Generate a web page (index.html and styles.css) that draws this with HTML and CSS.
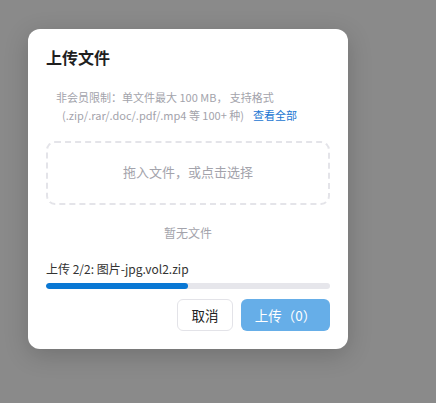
FILE: index.html
```html
<!DOCTYPE html>
<html lang="zh-CN">
<head>
<meta charset="utf-8">
<title>上传文件</title>
<link rel="stylesheet" href="styles.css">
</head>
<body>
  <div class="dialog">
    <h2 class="dialog-title">上传文件</h2>
    <div class="limit-note">
      <span>非会员限制：单文件最大 100 MB， 支持格式</span>
      <span class="limit-line">(.zip/.rar/.doc/.pdf/.mp4 等 100+ 种)<a class="see-all" href="#">查看全部</a></span>
    </div>
    <div class="drop-zone">拖入文件，或点击选择</div>
    <div class="empty-list">暂无文件</div>
    <div class="progress-label">上传 2/2: 图片-jpg.vol2.zip</div>
    <div class="progress-track"><div class="progress-fill" style="width:50%"></div></div>
    <div class="actions">
      <button class="btn btn-cancel">取消</button>
      <button class="btn btn-upload">上传（0）</button>
    </div>
  </div>
</body>
</html>
```
FILE: styles.css
```css
html, body {
  margin: 0;
  height: 100%;
}
body {
  background: #8a8a8a;
  font-family: "Noto Sans CJK SC", "Noto Sans", sans-serif;
  padding: 29px 0 0 28px;
  box-sizing: border-box;
}
.dialog {
  width: 320px;
  height: 320px;
  box-sizing: border-box;
  background: #fff;
  border-radius: 12px;
  padding: 16px 18px 18px;
  box-shadow: 0 6px 24px rgba(0, 0, 0, 0.18);
  display: flex;
  flex-direction: column;
}
.dialog-title {
  margin: 0;
  font-size: 16px;
  line-height: 24px;
  font-weight: 700;
  color: #1f1f1f;
}
.limit-note {
  margin-top: 19px;
  padding-left: 10px;
  display: flex;
  flex-direction: column;
  font-size: 11px;
  line-height: 18px;
  color: #a3a3ab;
}
.limit-line {
  display: flex;
  align-items: baseline;
  padding-left: 6px;
}
.see-all {
  margin-left: 9px;
  color: #1a76d2;
  text-decoration: none;
}
.drop-zone {
  margin-top: 17px;
  height: 64px;
  box-sizing: border-box;
  border: 2px dashed #e4e4e9;
  border-radius: 9px;
  display: flex;
  align-items: center;
  justify-content: center;
  padding-bottom: 3px;
  font-size: 13px;
  color: #a3a3ab;
}
.empty-list {
  margin-top: 19px;
  text-align: center;
  font-size: 12px;
  line-height: 18px;
  color: #a3a3ab;
}
.progress-label {
  margin-top: 18px;
  font-size: 12px;
  line-height: 18px;
  color: #333;
}
.progress-track {
  margin-top: 5px;
  height: 6px;
  border-radius: 3px;
  background: #e6e6eb;
  overflow: hidden;
}
.progress-fill {
  height: 100%;
  background: #0a78d4;
  border-radius: 3px;
}
.actions {
  margin-top: auto;
  display: flex;
  justify-content: flex-end;
  gap: 8px;
}
.btn {
  height: 32px;
  border-radius: 6px;
  font-family: inherit;
  font-size: 13.5px;
  cursor: pointer;
}
.btn-cancel {
  width: 56px;
  background: #fff;
  border: 1px solid #e3e3e8;
  color: #222;
}
.btn-upload {
  width: 89px;
  background: #66aee8;
  border: none;
  color: #fff;
}
```
